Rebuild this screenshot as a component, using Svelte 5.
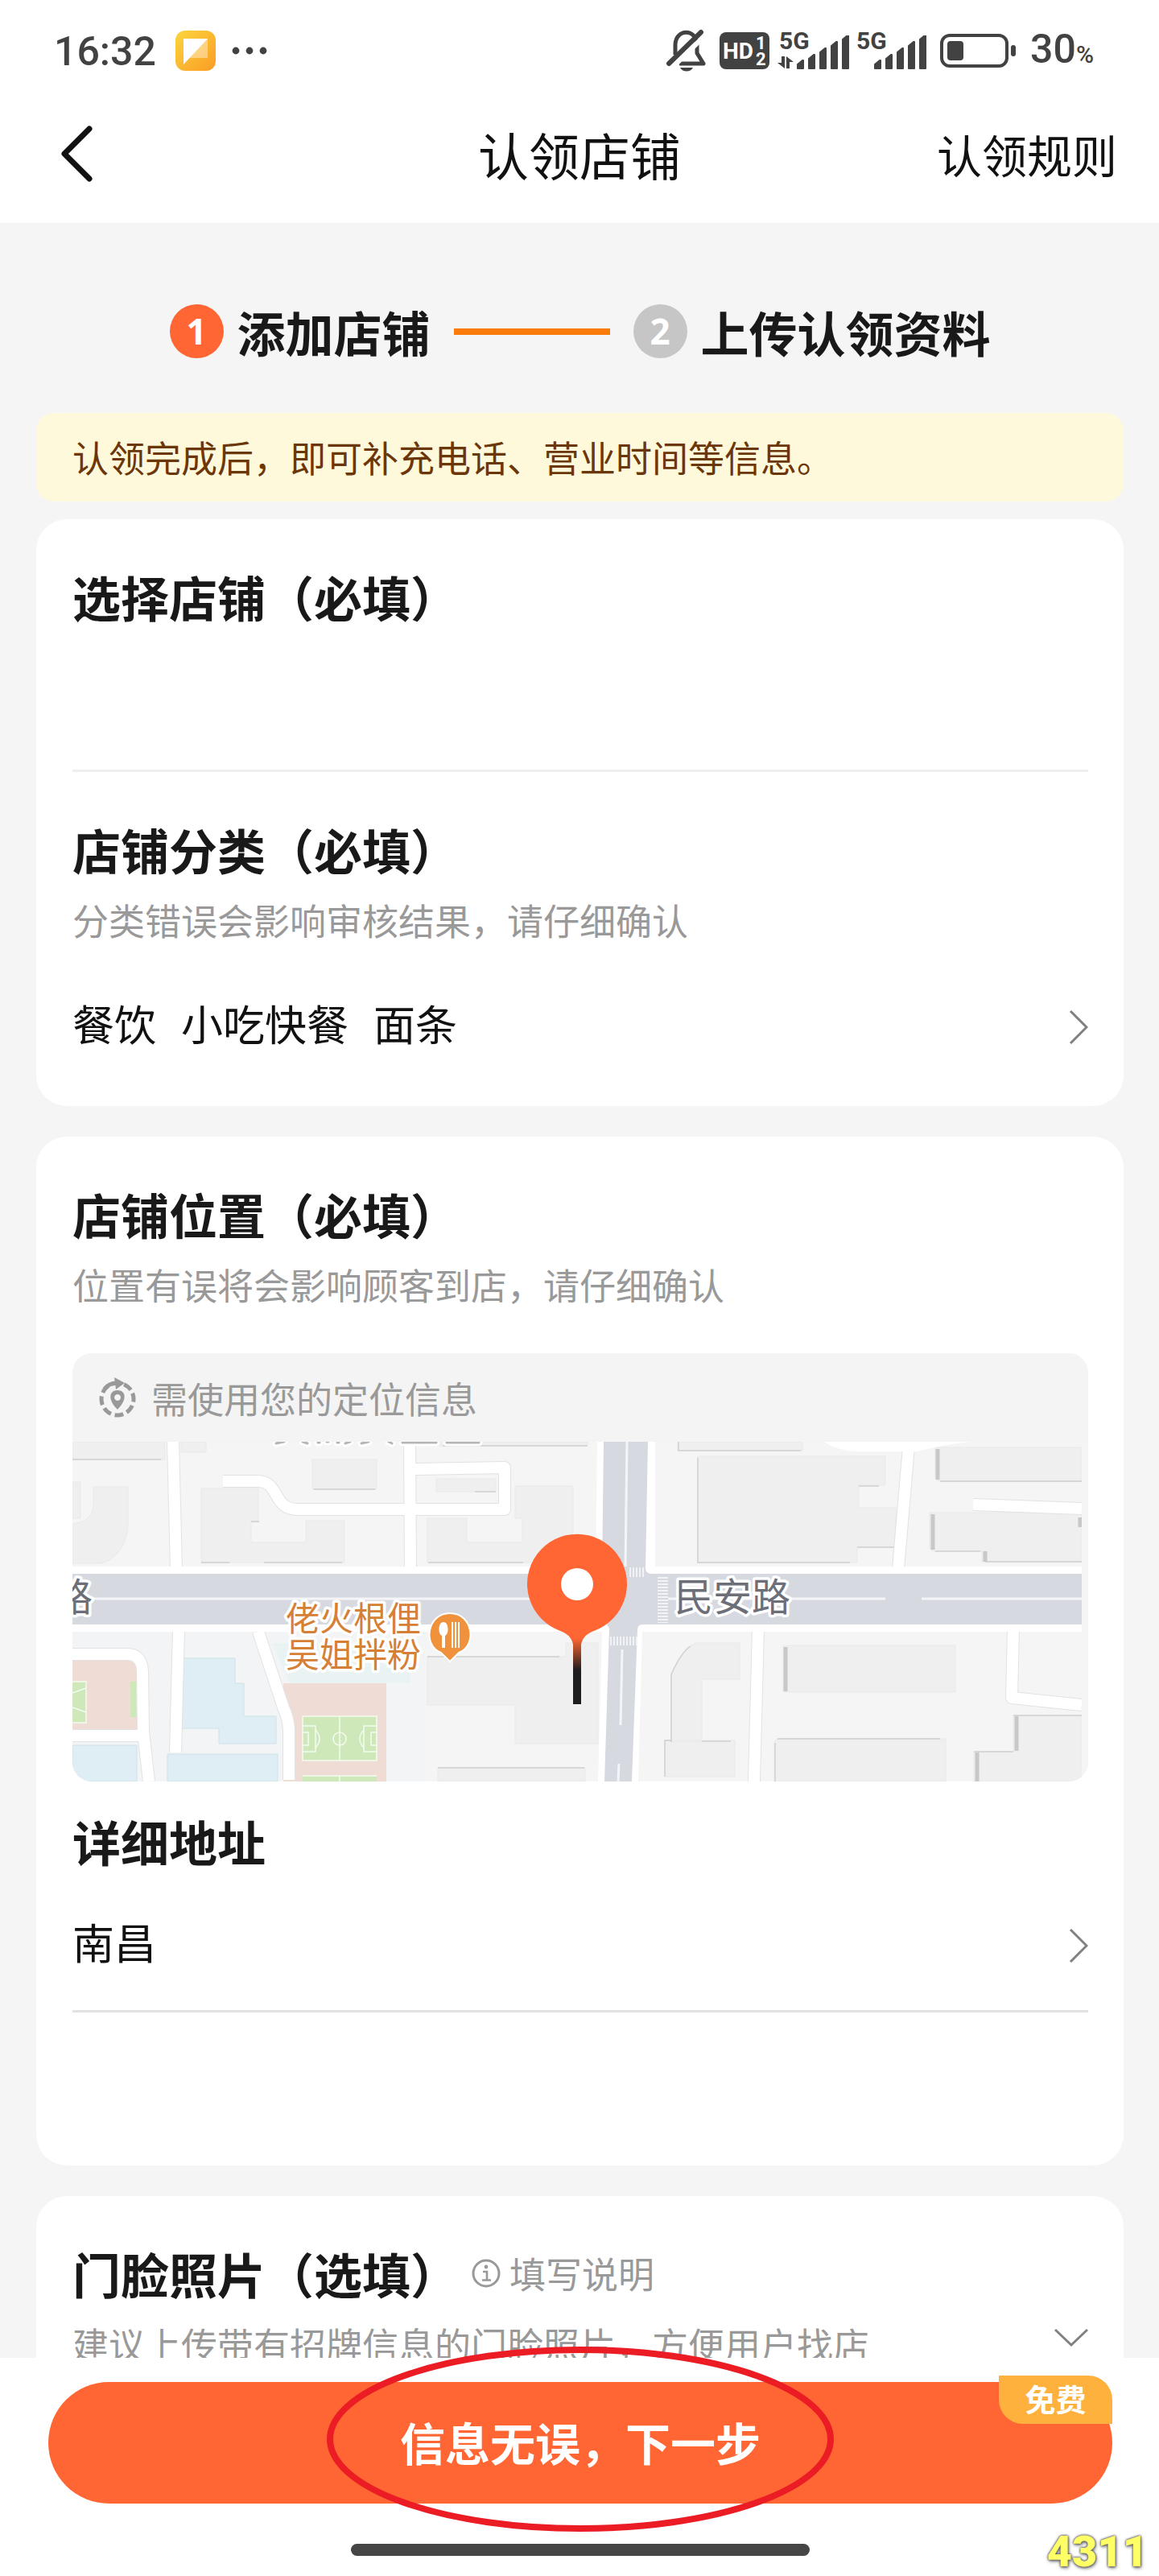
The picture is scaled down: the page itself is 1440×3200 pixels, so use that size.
<script>
    // Form data
    let shopName = '';
    let address = '';

    const categories = ['餐饮', '小吃快餐', '面条'];
    const city = '南昌';

    // Heights of the signal bars
    const bars = [10, 17, 25, 33, 41];
</script>

{#snippet signal()}
    <svg class="signal" width="66" height="42" viewBox="0 0 66 42" aria-hidden="true">
        {#each bars as bar, i}
            <path d="M{i * 14 + 1} 41 v{-bar + 5} l6 -5 h1 v{bar} z" fill="#424242" stroke="#424242" stroke-width="2" stroke-linejoin="round" />
        {/each}
    </svg>
{/snippet}

{#snippet arrow()}
    <svg class="arrow" width="24" height="52" viewBox="0 0 24 52" aria-hidden="true">
        <path d="M2 11 L22 31 L2 51" fill="none" stroke="#808080" stroke-width="3" />
    </svg>
{/snippet}

<div class="page">
    <header>
        <div class="status">
            <span class="time">16:32</span>
            <svg class="app-icon" width="50" height="50" viewBox="0 0 50 50" aria-hidden="true">
                <defs>
                    <linearGradient id="icon-fill" x1="0" y1="0" x2="1" y2="1">
                        <stop offset="0" stop-color="#fbd63c" />
                        <stop offset="1" stop-color="#fb9c26" />
                    </linearGradient>
                </defs>
                <rect width="50" height="50" rx="12" fill="url(#icon-fill)" />
                <path d="M10 10 h30 v24 h-24 l-6 8 z" fill="#fff" opacity="0.4" />
                <path d="M10 10 h30 L10 42 z" fill="#fff" />
            </svg>
            <svg width="44" height="10" viewBox="0 0 44 10" aria-hidden="true">
                <circle cx="5" cy="5" r="4.4" fill="#424242" />
                <circle cx="22" cy="5" r="4.4" fill="#424242" />
                <circle cx="39" cy="5" r="4.4" fill="#424242" />
            </svg>
            <div class="status-right">
                <svg width="50" height="54" viewBox="0 0 50 54" aria-hidden="true">
                    <path d="M11 32 V20 C11 -1 38 -1 38 20 V30 L46 43 H16" fill="none" stroke="#424242" stroke-width="5" stroke-linejoin="round" />
                    <path d="M7 48 L48 8" stroke="#fff" stroke-width="6" />
                    <path d="M3 43 L43 4" stroke="#424242" stroke-width="6" stroke-linecap="round" />
                    <path d="M17 48 h16 c-3 6 -13 6 -16 0z" fill="#424242" />
                </svg>
                <svg class="hd" width="62" height="46" viewBox="0 0 62 46" aria-label="HD">
                    <rect width="62" height="46" rx="8" fill="#424242" />
                    <text x="4" y="33" class="hd-text">HD</text>
                    <text x="45" y="21" class="hd-num">1</text>
                    <text x="45" y="41" class="hd-num">2</text>
                </svg>
                <div class="net">
                    <span>5G</span>
                    {@render signal()}
                    <svg class="updown" width="20" height="15" viewBox="0 0 20 15" aria-hidden="true">
                        <path d="M9 0 V15 L0 8 H5 V0 z M11 15 V0 L20 7 H15 V15 z" fill="#424242" />
                    </svg>
                </div>
                <div class="net">
                    <span>5G</span>
                    {@render signal()}
                </div>
                <svg class="battery" width="96" height="42" viewBox="0 0 96 42" aria-hidden="true">
                    <rect x="2" y="2" width="81" height="38" rx="10" fill="none" stroke="#424242" stroke-width="4" />
                    <rect x="9" y="9" width="20" height="24" rx="4" fill="#424242" />
                    <rect x="88" y="14" width="6" height="14" rx="3" fill="#424242" />
                </svg>
                <span class="time">30<small>%</small></span>
            </div>
        </div>
        <nav>
            <button class="back" type="button" aria-label="返回">
                <svg width="44" height="72" viewBox="0 0 44 72" aria-hidden="true">
                    <path d="M37 5 L6 36 L37 67" fill="none" stroke="#111" stroke-width="7" stroke-linecap="round" stroke-linejoin="round" />
                </svg>
            </button>
            <h1>认领店铺</h1>
            <a href="#rules">认领规则</a>
        </nav>
    </header>

    <main>
        <div class="steps">
            <span class="num active">1</span>
            <span class="step">添加店铺</span>
            <span class="line"></span>
            <span class="num">2</span>
            <span class="step">上传认领资料</span>
        </div>

        <p class="notice">认领完成后，即可补充电话、营业时间等信息。</p>

        <section class="card">
            <h2><label for="shop">选择店铺（必填）</label></h2>
            <input id="shop" class="field" type="text" bind:value={shopName} />
            <h2>店铺分类（必填）</h2>
            <p class="hint">分类错误会影响审核结果，请仔细确认</p>
            <button class="row" type="button">
                {#each categories as category}
                    <span>{category}</span>
                {/each}
                {@render arrow()}
            </button>
        </section>

        <section class="card">
            <h2>店铺位置（必填）</h2>
            <p class="hint">位置有误将会影响顾客到店，请仔细确认</p>
            <div class="map">
                <div class="map-bar">
                    <svg width="48" height="50" viewBox="0 0 48 50" aria-hidden="true">
                        <path d="M8 14 A20 20 0 0 1 22 7" fill="none" stroke="#999" stroke-width="5" />
                        <path d="M20 0 L33 7 L22 15 z" fill="#999" />
                        <circle cx="24" cy="27" r="20" fill="none" stroke="#999" stroke-width="5" stroke-dasharray="11 4.7" stroke-dashoffset="-24" pathLength="125.6" />
                        <path d="M24 40 C11 27 14 16 24 16 C34 16 37 27 24 40z M24 21 a4 4 0 1 0 0.1 0z" fill="#999" fill-rule="evenodd" />
                    </svg>
                    <span>需使用您的定位信息</span>
                </div>
                <svg class="map-view" viewBox="0 0 1262 422" role="img" aria-label="地图">
                    <defs>
                        <linearGradient id="stem" gradientUnits="userSpaceOnUse" x1="0" y1="244" x2="0" y2="284">
                            <stop offset="0" stop-color="#ff6633" />
                            <stop offset="1" stop-color="#1e1c1c" />
                        </linearGradient>
                        <pattern id="bars-x" width="4" height="4" patternUnits="userSpaceOnUse">
                            <rect width="2" height="4" fill="#f2f3f6" />
                        </pattern>
                        <pattern id="bars-y" width="4" height="4" patternUnits="userSpaceOnUse">
                            <rect width="4" height="2" fill="#f2f3f6" />
                        </pattern>
                    </defs>
                    <rect width="1262" height="422" fill="#f5f5f5" />
                    <path d="M0 236 H440 V422 H0z" fill="#f3f4f6" />
                    <path d="M248 250 H420 V300 H270z" fill="#e9f3f3" />

                    <!-- Buildings -->
                    <g fill="#efefef" stroke="#e9e9e9" stroke-width="1">
                        <path d="M0 0 H115 V22 H0z M135 0 H166 V13 H135z" />
                        <path d="M0 50 H10 V95 H0z M26 56 H69 V100 C69 130 50 151 32 151 H0 V102 Q24 100 26 80z" />
                        <path d="M298 22 H378 V59 H298z" />
                        <path d="M160 58 H231 V100 H222 V125 H290 V98 H338 V150 H160z" />
                        <path d="M452 46 H526 V62 H452z M441 0 H640 V5 H441z" />
                        <path d="M441 95 H490 V125 H559 V95 H550 V55 H622 V150 H441z" />
                        <path d="M441 267 H613 V250 H653 V375 H550 V327 H441z M454 405 H637 V422 H454z" />
                        <path d="M752 0 H907 V11 H752z" />
                        <path d="M777 18 H1010 V54 H977 V82 H1023 V131 H975 V150 H777z" />
                        <path d="M1072 7 H1254 V49 H1078 Q1072 49 1072 43z" />
                        <path d="M1065 88 H1254 V149 H1130 V136 H1072 Q1065 136 1065 130z" />
                        <path d="M744 289 Q758 253 776 250 H829 V295 H782 V373 H744z M736 371 H823 V416 H736z" />
                        <path d="M883 253 H1097 V311 H883z M872 375 Q872 369 878 369 H1085 V422 H872z" />
                        <path d="M1169 340 H1254 V422 H1120 V385 H1169z" />
                    </g>
                    <g fill="none" stroke="#d0d0d0" stroke-width="1.5">
                        <path d="M0 22 H110 M300 59 H376 M160 150 H195 M238 150 H335 M222 99 H232 M460 5 H640 M442 150 H560 M500 62 H526" />
                        <path d="M753 0 V11 H905 M777 20 V150 H966 M977 55 H1002 M975 131 H1023 M744 373 V289 Q756 262 768 254 M736 416 V371 H744 M782 372 H818" />
                        <path d="M1078 49 H1254 M1072 136 H1128 M1134 149 H1254 M876 369 H1078 M873 422 V374 M454 405 H636 M441 267 H605 M1169 340 H1254 M1120 385 H1169" />
                    </g>
                    <path d="M1075 9 V47 M1069 90 V134 M1134 136 V149 M886 255 V310 M1173 341 V384 M1124 386 V422 M1252 94 V106" fill="none" stroke="#c8c8c8" stroke-width="5" />

                    <!-- Water and playgrounds -->
                    <g fill="#dfeef4" stroke="#cfe0e8" stroke-width="1">
                        <path d="M127 269 H202 V300 H213 V341 H253 V375 H182 V356 H127z" />
                        <path d="M118 388 H255 V422 H118z M0 377 H80 V422 H0z" />
                    </g>
                    <path d="M0 270 H81 V358 H0z M262 300 H390 V422 H262z" fill="#efdcd4" />
                    <path d="M0 298 H17 V349 H0z M72 298 H79 V342 H72z M286 341 H378 V396 H286z M286 415 H378 V422 H286z" fill="#cfe8b9" />
                    <g fill="none" stroke="#f4fbef" stroke-width="1.5">
                        <path d="M286 341 H378 V396 H286z M332 341 V396 M286 353 H302 V385 H286 M378 353 H362 V385 H378 M286 361 H293 V377 H286 M378 361 H371 V377 H378" />
                        <path d="M302 358 Q312 369 302 380 M362 358 Q352 369 362 380 M286 415 H378 M332 415 V422 M0 298 H17 V349 H0 M0 312 L17 306 M0 330 L17 336" />
                        <circle cx="332" cy="369" r="8" />
                    </g>

                    <!-- Small roads, edge first and then the white surface -->
                    <g fill="none" stroke-linejoin="round">
                        {#each ['#e2e2e4', '#ffffff'] as color, i}
                            <g stroke={color} stroke-width={16 - i * 2}>
                                <path d="M125 0 L129 160 M187 49 H230 C258 49 248 84 280 84 H537 V32 L426 34 M419 0 L420 160" />
                                <path d="M0 264 H68 Q86 264 87 285 L88 360 L95 422 M0 365 H86 M132 236 L131 270 L128 386 M231 236 L262 330 Q269 345 269 360 V420" />
                                <path d="M1039 6 L1026 158 M1119 78 L1254 83 M852 232 L847 422 M1169 232 L1167 318 L1254 327" />
                            </g>
                        {/each}
                    </g>
                    <path d="M934 0 Q950 12 980 12 H1050 Q1080 4 1115 0z" fill="#fff" />

                    <!-- Avenues -->
                    <path d="M0 155 H650 L652 0 H724 V155 H1254 V236 H708 L703 422 H653 L658 236 H0z" fill="#fff" />
                    <path d="M0 164 H658 L660 0 H715 L712 158 Q713 164 720 164 H1254 V227 H708 Q702 227 702 234 L695 422 H661 L667 232 L664 227 H0z" fill="#d7d9e1" />
                    <path d="M0 195 H570 M740 195 H1010 M1055 195 H1254 M689 0 L687 155 M683 258 L681 352 M679 400 L678 422" fill="none" stroke="#f4f5f9" stroke-width="3" />
                    <path d="M690 156 H712 V168 H690z M667 242 H702 V253 H667z" fill="url(#bars-x)" />
                    <path d="M727 168 H740 V225 H727z" fill="url(#bars-y)" />
                    <rect x="1254" width="8" height="422" fill="#f5f5f5" />

                    <!-- Place name cut off by the bar above -->
                    <g fill="none" stroke-linecap="round">
                        {#each [['#ffffff', 9], ['#b5b5b5', 3]] as [color, width]}
                            <path d="M253 2 L263 0 M286 0 L292 2 M305 1 H307 M316 0 H318 M329 1 H331 M339 2 L345 0 M359 2 L368 0 M393 0 L397 2 M410 1 H452 M465 1 H505" stroke={color} stroke-width={width} />
                        {/each}
                    </g>

                    <text class="road" x="-23" y="210">路</text>
                    <text class="road" x="748" y="210">民安路</text>
                    <text class="poi" y="235">
                        <tspan x="265">佬火根俚</tspan>
                        <tspan x="265" dy="45">吴姐拌粉</tspan>
                    </text>

                    <path d="M469 273 L458 262 C435 254 440 213 469 213 C498 213 503 254 480 262z" fill="#f0923c" stroke="#fff" stroke-width="2" />
                    <path d="M461 224 c-7 0 -7 15 -2 17 v15 h4 v-15 c5 -2 5 -17 -2 -17z M471 224 h2 v32 h-2z M475 224 h2 v32 h-2z M479 224 h2 v32 h-2z" fill="#fff" />

                    <!-- Pin -->
                    <path d="M622 326 V252 Q620 240 606 235 A62 62 0 1 1 648 235 Q634 240 632 252 V326z" fill="url(#stem)" />
                    <circle cx="627" cy="177" r="20" fill="#fff" />
                </svg>
            </div>
            <h2 class="after-map">详细地址</h2>
            <button class="row bordered" type="button">
                <span>{city}</span>
                {@render arrow()}
            </button>
            <input class="field last" type="text" aria-label="详细地址" bind:value={address} />
        </section>

        <section class="card">
            <div class="title-row">
                <h2>门脸照片（选填）</h2>
                <a href="#guide">
                    <svg width="38" height="38" viewBox="0 0 38 38" aria-hidden="true">
                        <circle cx="19" cy="19" r="16" fill="none" stroke="#999" stroke-width="3" />
                        <circle cx="19" cy="11" r="2.4" fill="#999" />
                        <path d="M15 17 H20 V27 M14 27.5 H25" fill="none" stroke="#999" stroke-width="2.6" />
                    </svg>
                    填写说明
                </a>
            </div>
            <div class="title-row spread">
                <p class="hint">建议上传带有招牌信息的门脸照片，方便用户找店</p>
                <svg width="42" height="24" viewBox="0 0 42 24" aria-hidden="true">
                    <path d="M1 2 L21 21 L41 2" fill="none" stroke="#808080" stroke-width="3" />
                </svg>
            </div>
        </section>
    </main>

    <footer>
        <button class="next" type="button">
            信息无误，下一步
            <span class="badge">免费</span>
        </button>
        <div class="home-bar"></div>
        <svg class="mark" width="638" height="240" viewBox="0 0 638 240" aria-hidden="true">
            <ellipse cx="319" cy="120" rx="311" ry="111" fill="none" stroke="#eb1c24" stroke-width="8" />
        </svg>
        <span class="stamp">4311</span>
    </footer>
</div>

<style>
    :global(body) {
        background: #fff;
    }

    .page {
        display: flex;
        flex-direction: column;
        height: 100vh;
        background: #f5f5f5;
        color: #191919;
        font-family: "Noto Sans CJK SC", "Noto Sans", sans-serif;
    }

    h1, h2, p {
        margin: 0;
    }

    button {
        padding: 0;
        border: none;
        background: none;
        color: inherit;
        font-family: inherit;
        cursor: pointer;
    }

    a {
        color: inherit;
        text-decoration: none;
    }

    header {
        flex: none;
        background: #fff;
    }

    .status {
        display: flex;
        align-items: center;
        height: 126px;
        padding: 0 81px 0 67px;
        color: #424242;
    }

    .time {
        padding-top: 2px;
        font-family: Roboto, sans-serif;
        font-size: 50px;
        font-weight: 500;
        line-height: 60px;
    }

    .time small {
        font-size: 30px;
    }

    .app-icon {
        margin: 0 20px 0 24px;
    }

    .status-right {
        display: flex;
        align-items: center;
        gap: 16px;
        margin-left: auto;
    }

    .hd-text, .hd-num {
        fill: #fff;
        font-family: Roboto, sans-serif;
        font-weight: 700;
    }

    .hd-text {
        font-size: 28px;
    }

    .hd-num {
        font-size: 22px;
    }

    .net {
        position: relative;
        padding-left: 18px;
        height: 46px;
    }

    .net + .net {
        margin-left: -4px;
    }

    .net span {
        position: absolute;
        left: -4px;
        top: -5px;
        font-family: Roboto, sans-serif;
        font-size: 30px;
        font-weight: 700;
        line-height: 32px;
    }

    .net .signal {
        display: block;
        margin-top: 4px;
    }

    .updown {
        position: absolute;
        left: -6px;
        bottom: 1px;
    }

    nav {
        display: grid;
        grid-template-columns: 1fr auto 1fr;
        align-items: center;
        height: 151px;
        padding: 0 52px 22px 74px;
        box-sizing: border-box;
        color: #111;
    }

    .back {
        justify-self: start;
        height: 72px;
    }

    nav h1 {
        margin-left: -22px;
        font-size: 63px;
        font-weight: 400;
        line-height: 80px;
    }

    nav a {
        justify-self: end;
        font-size: 56px;
        line-height: 80px;
    }

    main {
        flex: 1;
        min-height: 0;
        overflow: hidden;
        padding: 101px 44px 0 45px;
    }

    .steps {
        display: flex;
        justify-content: center;
        align-items: center;
        height: 67px;
        margin-bottom: 68px;
    }

    .num {
        width: 67px;
        margin-right: 17px;
        border-radius: 50%;
        background: #c6c6c6;
        color: #fff;
        font-family: "Noto Sans", sans-serif;
        font-size: 44px;
        font-weight: 700;
        line-height: 67px;
        text-align: center;
    }

    .num.active {
        background: #ff6633;
    }

    .step {
        font-size: 60px;
        font-weight: 700;
        line-height: 64px;
    }

    .line {
        width: 194px;
        height: 8px;
        margin: 0 29px;
        background: #fb7b0a;
    }

    .notice {
        margin-bottom: 22px;
        padding: 21px 45px;
        border-radius: 22px;
        background: #fff9db;
        color: #6b3709;
        font-size: 45px;
        line-height: 68px;
    }

    .card {
        margin-bottom: 38px;
        padding: 56px 44px 19px 45px;
        border-radius: 38px;
        background: #fff;
    }

    h2 {
        font-size: 60px;
        font-weight: 700;
        line-height: 80px;
    }

    .field {
        display: block;
        width: 100%;
        height: 178px;
        margin-bottom: 56px;
        padding: 0;
        box-sizing: border-box;
        border: none;
        border-bottom: 3px solid #eee;
        outline: none;
        background: none;
        font-family: inherit;
        font-size: 52px;
    }

    .field.last {
        height: 171px;
        margin-bottom: 0;
        border-bottom: none;
    }

    .hint {
        margin-top: 16px;
        color: #999;
        font-size: 45px;
        line-height: 64px;
    }

    .row {
        display: flex;
        align-items: center;
        gap: 31px;
        width: 100%;
        height: 168px;
        margin-top: 12px;
        color: #111;
        font-size: 52px;
        line-height: 80px;
    }

    .row.bordered {
        height: 173px;
        margin-top: 0;
        border-bottom: 3px solid #e2e2e2;
    }

    .arrow {
        margin-left: auto;
    }

    .map {
        overflow: hidden;
        margin-top: 53px;
        border-radius: 24px;
        background: #f4f4f4;
    }

    .map-bar {
        display: flex;
        align-items: center;
        gap: 18px;
        height: 110px;
        padding-left: 32px;
        color: #999;
        font-size: 45px;
    }

    .map-view {
        display: block;
        width: 100%;
    }

    .road, .poi {
        paint-order: stroke;
        stroke: #fff;
        stroke-width: 7px;
        stroke-linejoin: round;
    }

    .road {
        fill: #6c6f78;
        font-size: 48px;
    }

    .poi {
        fill: #d67f36;
        font-size: 42px;
    }

    .after-map {
        margin-top: 34px;
    }

    .title-row {
        display: flex;
        align-items: center;
    }

    .title-row a {
        display: flex;
        align-items: center;
        gap: 10px;
        margin-left: 15px;
        color: #999;
        font-size: 45px;
        line-height: 64px;
    }

    .spread {
        justify-content: space-between;
        align-items: center;
    }

    footer {
        position: relative;
        flex: none;
        padding: 30px 58px 25px 60px;
        background: #fff;
    }

    .next {
        position: relative;
        display: block;
        width: 100%;
        height: 151px;
        padding-bottom: 4px;
        border-radius: 76px;
        background: #ff6633;
        color: #fff;
        font-size: 56px;
        font-weight: 700;
    }

    .badge {
        position: absolute;
        top: -8px;
        right: 0;
        width: 141px;
        height: 60px;
        border-radius: 0 30px 0 30px;
        background: #ffb13e;
        font-size: 38px;
        line-height: 56px;
    }

    .home-bar {
        width: 570px;
        height: 15px;
        margin: 50px auto 0;
        border-radius: 8px;
        background: #464646;
    }

    .mark {
        position: absolute;
        top: -19px;
        left: 50%;
        margin-left: -318px;
        pointer-events: none;
    }

    .stamp {
        position: absolute;
        right: 14px;
        bottom: 0;
        color: #ffff66;
        font-family: Roboto, sans-serif;
        font-size: 54px;
        font-weight: 900;
        line-height: 60px;
        text-shadow: 0 0 3px #555, 0 0 3px #666, 1px 2px 4px #777;
    }
</style>
